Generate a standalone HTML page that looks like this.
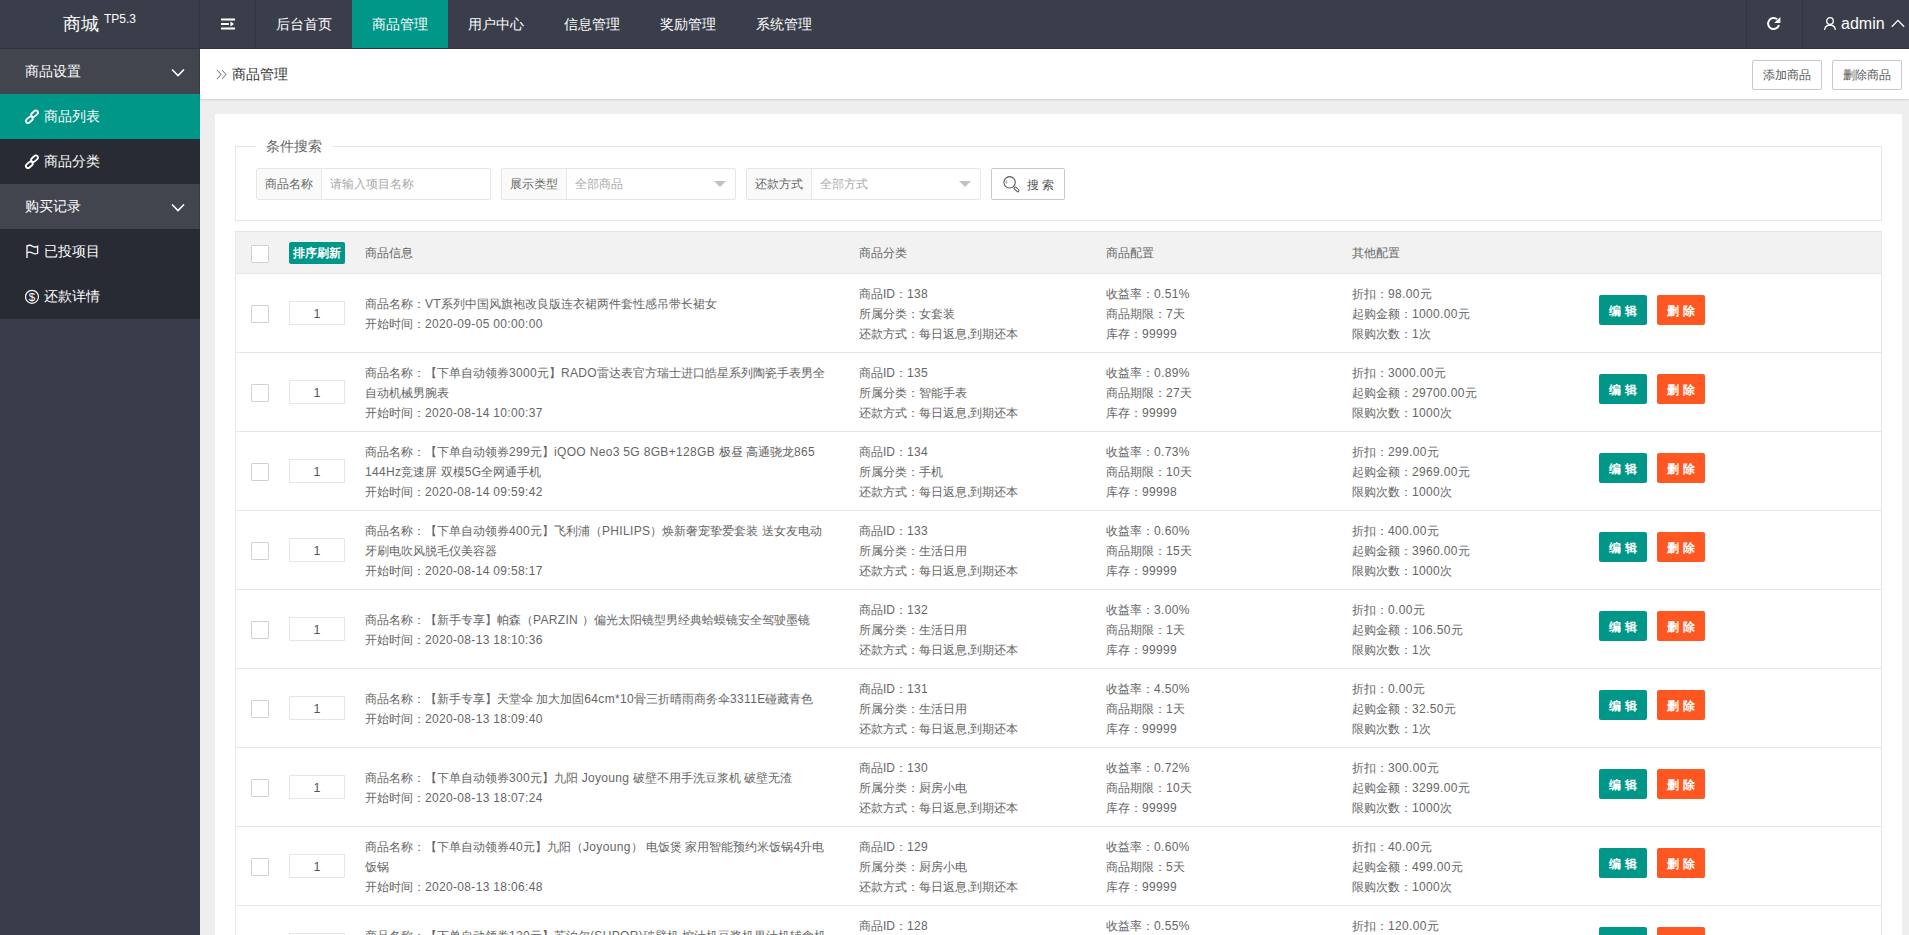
<!DOCTYPE html>
<html><head><meta charset="utf-8"><title>商城</title>
<style>
*{box-sizing:border-box;margin:0;padding:0}
html,body{width:1909px;height:935px;overflow:hidden}
body{position:relative;background:#eeeeee;font-family:"Liberation Sans",sans-serif;font-size:14px;color:#666}
.abs{position:absolute}
#hd{left:0;top:0;width:1909px;height:49px;background:#3a3e4a;border-bottom:1px solid #30333d}
#logo{left:0;top:0;width:199px;height:48px;color:#fff}
#logo .t{position:absolute;left:63px;top:12px;font-size:18px;line-height:24px}
#logo .v{position:absolute;left:104px;top:12px;font-size:12px;line-height:14px}
.vline{position:absolute;top:0;width:1px;height:48px;background:#32353f}
.nav{position:absolute;top:0;height:48px;line-height:48px;width:96px;text-align:center;color:#fff;font-size:14px}
.nav.on{background:#009688}
#side{left:0;top:49px;width:200px;height:886px;background:#393d49}
.grp{position:absolute;left:0;width:200px;height:45px;background:#42454e;color:#fff;font-size:14px;line-height:45px;padding-left:25px;border-right:1px solid #3b3d46}
.item{position:absolute;left:0;width:200px;height:45px;background:#282b33;color:#fff;font-size:14px;line-height:45px;padding-left:44px}
.item.on{background:#009688}
.item svg{position:absolute;left:25px;top:15px}
.item svg[width="20"]{left:22px;top:14px}
.chev{position:absolute;left:171px;top:19px}
#crumb{left:200px;top:49px;width:1709px;height:50px;background:#fff;box-shadow:0 1px 2px rgba(0,0,0,.12)}
#panel{left:215px;top:114px;width:1687px;height:900px;background:#fff}
.btn-o{position:absolute;top:11px;height:30px;line-height:28px;border:1px solid #c9c9c9;border-radius:2px;background:#fff;color:#555;font-size:12px;text-align:center}

.fsl{position:absolute;left:235px;top:146px;width:1647px;height:75px;border:1px solid #e6e6e6}
.legend{position:absolute;left:256px;top:136px;padding:0 10px;background:#fff;font-size:14px;line-height:20px;color:#666}
.ig{position:absolute;top:168px;width:235px;height:32px;border:1px solid #e6e6e6;border-radius:2px;background:#fff}
.ig .lb{position:absolute;left:0;top:0;width:65px;height:30px;background:#fafafa;border-right:1px solid #e6e6e6;font-size:12px;line-height:30px;text-align:center;color:#666;border-radius:2px 0 0 2px}
.ig .ph{position:absolute;left:73px;top:0;font-size:12px;line-height:30px;color:#aaa;white-space:nowrap}
.ig .tri{position:absolute;left:212px;top:12px;width:0;height:0;border-left:6px solid transparent;border-right:6px solid transparent;border-top:6px solid #c2c2c2}
.sbtn{position:absolute;left:991px;top:168px;width:74px;height:32px;border:1px solid #c9c9c9;border-radius:2px;background:#fff;color:#555;font-size:12px;line-height:30px}
.tbl{position:absolute;left:235px;top:231px;width:1647px;height:720px;border:1px solid #e6e6e6;border-bottom:0}
.thd{position:absolute;left:0;top:0;width:1645px;height:42px;background:#f2f2f2;border-bottom:1px solid #e6e6e6}
.row{position:absolute;left:0;width:1645px;height:79px;border-bottom:1px solid #e6e6e6;background:#fff}
.cb{position:absolute;left:15px;width:18px;height:18px;border:1px solid #d2d2d2;border-radius:1px;background:#fff}
.c{position:absolute;font-size:12px;line-height:20px;color:#666;white-space:nowrap}
.l{letter-spacing:0.33px}
.gbtn{position:absolute;left:53px;top:10px;width:56px;height:22px;background:#009688;border-radius:2px;color:#fff;font-size:12px;line-height:22px;text-align:center;font-weight:bold}
.sort{position:absolute;left:53px;width:56px;height:24px;border:1px solid #e6e6e6;font-size:12.5px;line-height:24px;text-align:center;color:#555;background:#fff}
.ebtn,.dbtn{position:absolute;width:48px;height:30px;border-radius:2px;color:#fff;font-size:12px;line-height:32px;text-align:center;font-weight:bold}
.ebtn{left:1363px;background:#009688}
.dbtn{left:1421px;background:#ff5722}
</style></head>
<body>
<div id="hd" class="abs">
  <div id="logo" class="abs"><span class="t">商城</span><span class="v">TP5.3</span></div>
  <div class="vline" style="left:199px"></div>
  <div class="vline" style="left:255px"></div>
  <svg class="abs" style="left:221px;top:18px" width="14" height="12" viewBox="0 0 14 12"><rect x="0" y="0.5" width="14" height="2" fill="#fff"/><rect x="0" y="5" width="8" height="2" fill="#fff"/><path d="M9.5 3.5 L13 6 L9.5 8.5 Z" fill="#fff"/><rect x="0" y="9.5" width="14" height="2" fill="#fff"/></svg>
  <div class="nav" style="left:256px">后台首页</div>
  <div class="nav on" style="left:352px">商品管理</div>
  <div class="nav" style="left:448px">用户中心</div>
  <div class="nav" style="left:544px">信息管理</div>
  <div class="nav" style="left:640px">奖励管理</div>
  <div class="nav" style="left:736px">系统管理</div>
  <div class="vline" style="left:1746px"></div>
  <div class="vline" style="left:1802px"></div>
  <svg class="abs" style="left:1762px;top:12px" width="24" height="24" viewBox="0 0 24 24"><path d="M16.9 12.9 A5.5 5.5 0 1 1 15.1 7.3" fill="none" stroke="#fff" stroke-width="2"/><path d="M18.4 4.9 L18.4 11.1 L12.2 11.1 Z" fill="#fff"/></svg>
  <svg class="abs" style="left:1823px;top:16px" width="14" height="15" viewBox="0 0 14 15"><circle cx="7" cy="5" r="3.3" fill="none" stroke="#fff" stroke-width="1.3"/><path d="M1.6 13.9 Q2 9.2 7 9 Q12 9.2 12.4 13.9" fill="none" stroke="#fff" stroke-width="1.3"/></svg>
  <span class="abs" style="left:1841px;top:14px;font-size:16px;line-height:20px;color:#fff">admin</span>
  <svg class="abs" style="left:1890px;top:18px" width="16" height="10" viewBox="0 0 16 10"><polyline points="1.8,8.8 8,2.4 14.2,8.8" fill="none" stroke="#fff" stroke-width="1.3"/></svg>
</div>
<div id="side" class="abs">
  <div class="grp" style="top:0">商品设置<svg class="chev" width="14" height="9" viewBox="0 0 14 9"><polyline points="1,1.5 7,7.5 13,1.5" fill="none" stroke="#fff" stroke-width="1.6"/></svg></div>
  <div class="item on" style="top:45px"><svg width="20" height="20" viewBox="0 0 20 20"><g fill="none" stroke="#fff" stroke-width="1.8"><rect x="-3.8" y="-2.1" width="7.6" height="4.2" rx="2.1" transform="translate(12.6 5.7) rotate(-42)"/><rect x="-3.8" y="-2.1" width="7.6" height="4.2" rx="2.1" transform="translate(7.3 11.8) rotate(-42)"/></g></svg>商品列表</div>
  <div class="item" style="top:90px"><svg width="20" height="20" viewBox="0 0 20 20"><g fill="none" stroke="#fff" stroke-width="1.8"><rect x="-3.8" y="-2.1" width="7.6" height="4.2" rx="2.1" transform="translate(12.6 5.7) rotate(-42)"/><rect x="-3.8" y="-2.1" width="7.6" height="4.2" rx="2.1" transform="translate(7.3 11.8) rotate(-42)"/></g></svg>商品分类</div>
  <div class="grp" style="top:135px">购买记录<svg class="chev" width="14" height="9" viewBox="0 0 14 9"><polyline points="1,1.5 7,7.5 13,1.5" fill="none" stroke="#fff" stroke-width="1.6"/></svg></div>
  <div class="item" style="top:180px"><svg width="15" height="15" viewBox="0 0 15 15"><g fill="none" stroke="#fff" stroke-width="1.3"><path d="M2 1.2 V13.9"/><path d="M2 2 C3.8 0.9 5.6 1 7.5 2.2 C9.2 3.3 10.8 3.3 12.6 2.2 V9.2 C10.8 10.2 9.2 10.2 7.5 9 C5.6 7.8 3.8 7.8 2 8.8"/></g></svg>已投项目</div>
  <div class="item" style="top:225px"><svg width="15" height="15" viewBox="0 0 15 15"><circle cx="7" cy="7.8" r="6.5" fill="none" stroke="#fff" stroke-width="1.2"/><text x="7" y="12" text-anchor="middle" font-family="Liberation Sans" font-size="11.5" fill="#fff">$</text></svg>还款详情</div>
</div>
<div id="crumb" class="abs">
  <svg class="abs" style="left:16px;top:20px" width="11" height="11" viewBox="0 0 11 11"><polyline points="1,1 5,5.5 1,10" fill="none" stroke="#888" stroke-width="1.1"/><polyline points="6,1 10,5.5 6,10" fill="none" stroke="#888" stroke-width="1.1"/></svg>
  <span class="abs" style="left:32px;top:15px;font-size:14px;line-height:20px;color:#333">商品管理</span>
  <div class="btn-o" style="left:1552px;width:70px">添加商品</div>
  <div class="btn-o" style="left:1632px;width:70px">删除商品</div>
</div>
<div id="panel" class="abs"></div>
<div class="fsl"></div>
<div class="legend">条件搜索</div>
<div class="ig" style="left:256px"><div class="lb">商品名称</div><div class="ph">请输入项目名称</div></div>
<div class="ig" style="left:501px"><div class="lb">展示类型</div><div class="ph">全部商品</div><div class="tri"></div></div>
<div class="ig" style="left:746px"><div class="lb">还款方式</div><div class="ph">全部方式</div><div class="tri"></div></div>
<div class="sbtn"><svg class="abs" style="left:11px;top:7px" width="18" height="18" viewBox="0 0 18 18"><circle cx="6.6" cy="6.3" r="5.7" fill="none" stroke="#555" stroke-width="1.05"/><path d="M3.3 4.6 Q2.9 6.2 3.6 7.6" fill="none" stroke="#666" stroke-width="0.8"/><rect x="-2.9" y="-1.2" width="5.8" height="2.4" rx="1.2" transform="translate(13.6 13.4) rotate(45)" fill="#fff" stroke="#555" stroke-width="0.95"/></svg><span class="abs" style="left:35px;top:1px">搜&nbsp;索</span></div>
<div class="tbl">
<div class="thd"><div class="cb" style="top:13px"></div><div class="gbtn">排序刷新</div><div class="c" style="left:129px;top:11px">商品信息</div><div class="c" style="left:623px;top:11px">商品分类</div><div class="c" style="left:870px;top:11px">商品配置</div><div class="c" style="left:1116px;top:11px">其他配置</div></div>
<div class="row" style="top:42px"><div class="cb" style="top:31px"></div><div class="sort" style="top:27px">1</div><div class="c" style="left:129px;top:20px">商品名称：<span class="l">VT</span>系列中国风旗袍改良版连衣裙两件套性感吊带长裙女<br>开始时间：<span class="l">2020-09-05 00:00:00</span></div><div class="c" style="left:623px;top:10px">商品ID：<span class="l">138</span><br>所属分类：女套装<br>还款方式：每日返息,到期还本</div><div class="c" style="left:870px;top:10px">收益率：<span class="l">0.51%</span><br>商品期限：<span class="l">7</span>天<br>库存：<span class="l">99999</span></div><div class="c" style="left:1116px;top:10px">折扣：<span class="l">98.00</span>元<br>起购金额：<span class="l">1000.00</span>元<br>限购次数：<span class="l">1</span>次</div><div class="ebtn" style="top:21px">编&nbsp;辑</div><div class="dbtn" style="top:21px">删&nbsp;除</div></div>
<div class="row" style="top:121px"><div class="cb" style="top:31px"></div><div class="sort" style="top:27px">1</div><div class="c" style="left:129px;top:10px">商品名称：【下单自动领券<span class="l">3000</span>元】<span class="l">RADO</span>雷达表官方瑞士进口皓星系列陶瓷手表男全<br>自动机械男腕表<br>开始时间：<span class="l">2020-08-14 10:00:37</span></div><div class="c" style="left:623px;top:10px">商品ID：<span class="l">135</span><br>所属分类：智能手表<br>还款方式：每日返息,到期还本</div><div class="c" style="left:870px;top:10px">收益率：<span class="l">0.89%</span><br>商品期限：<span class="l">27</span>天<br>库存：<span class="l">99999</span></div><div class="c" style="left:1116px;top:10px">折扣：<span class="l">3000.00</span>元<br>起购金额：<span class="l">29700.00</span>元<br>限购次数：<span class="l">1000</span>次</div><div class="ebtn" style="top:21px">编&nbsp;辑</div><div class="dbtn" style="top:21px">删&nbsp;除</div></div>
<div class="row" style="top:200px"><div class="cb" style="top:31px"></div><div class="sort" style="top:27px">1</div><div class="c" style="left:129px;top:10px">商品名称：【下单自动领券<span class="l">299</span>元】<span class="l">iQOO Neo3 5G 8GB+128GB </span>极昼 高通骁龙<span class="l">865</span><br><span class="l">144Hz</span>竞速屏 双模<span class="l">5G</span>全网通手机<br>开始时间：<span class="l">2020-08-14 09:59:42</span></div><div class="c" style="left:623px;top:10px">商品ID：<span class="l">134</span><br>所属分类：手机<br>还款方式：每日返息,到期还本</div><div class="c" style="left:870px;top:10px">收益率：<span class="l">0.73%</span><br>商品期限：<span class="l">10</span>天<br>库存：<span class="l">99998</span></div><div class="c" style="left:1116px;top:10px">折扣：<span class="l">299.00</span>元<br>起购金额：<span class="l">2969.00</span>元<br>限购次数：<span class="l">1000</span>次</div><div class="ebtn" style="top:21px">编&nbsp;辑</div><div class="dbtn" style="top:21px">删&nbsp;除</div></div>
<div class="row" style="top:279px"><div class="cb" style="top:31px"></div><div class="sort" style="top:27px">1</div><div class="c" style="left:129px;top:10px">商品名称：【下单自动领券<span class="l">400</span>元】飞利浦（<span class="l">PHILIPS</span>）焕新奢宠挚爱套装 送女友电动<br>牙刷电吹风脱毛仪美容器<br>开始时间：<span class="l">2020-08-14 09:58:17</span></div><div class="c" style="left:623px;top:10px">商品ID：<span class="l">133</span><br>所属分类：生活日用<br>还款方式：每日返息,到期还本</div><div class="c" style="left:870px;top:10px">收益率：<span class="l">0.60%</span><br>商品期限：<span class="l">15</span>天<br>库存：<span class="l">99999</span></div><div class="c" style="left:1116px;top:10px">折扣：<span class="l">400.00</span>元<br>起购金额：<span class="l">3960.00</span>元<br>限购次数：<span class="l">1000</span>次</div><div class="ebtn" style="top:21px">编&nbsp;辑</div><div class="dbtn" style="top:21px">删&nbsp;除</div></div>
<div class="row" style="top:358px"><div class="cb" style="top:31px"></div><div class="sort" style="top:27px">1</div><div class="c" style="left:129px;top:20px">商品名称：【新手专享】帕森（<span class="l">PARZIN </span>）偏光太阳镜型男经典蛤蟆镜安全驾驶墨镜<br>开始时间：<span class="l">2020-08-13 18:10:36</span></div><div class="c" style="left:623px;top:10px">商品ID：<span class="l">132</span><br>所属分类：生活日用<br>还款方式：每日返息,到期还本</div><div class="c" style="left:870px;top:10px">收益率：<span class="l">3.00%</span><br>商品期限：<span class="l">1</span>天<br>库存：<span class="l">99999</span></div><div class="c" style="left:1116px;top:10px">折扣：<span class="l">0.00</span>元<br>起购金额：<span class="l">106.50</span>元<br>限购次数：<span class="l">1</span>次</div><div class="ebtn" style="top:21px">编&nbsp;辑</div><div class="dbtn" style="top:21px">删&nbsp;除</div></div>
<div class="row" style="top:437px"><div class="cb" style="top:31px"></div><div class="sort" style="top:27px">1</div><div class="c" style="left:129px;top:20px">商品名称：【新手专享】天堂伞 加大加固<span class="l">64cm*10</span>骨三折晴雨商务伞<span class="l">3311E</span>碰藏青色<br>开始时间：<span class="l">2020-08-13 18:09:40</span></div><div class="c" style="left:623px;top:10px">商品ID：<span class="l">131</span><br>所属分类：生活日用<br>还款方式：每日返息,到期还本</div><div class="c" style="left:870px;top:10px">收益率：<span class="l">4.50%</span><br>商品期限：<span class="l">1</span>天<br>库存：<span class="l">99999</span></div><div class="c" style="left:1116px;top:10px">折扣：<span class="l">0.00</span>元<br>起购金额：<span class="l">32.50</span>元<br>限购次数：<span class="l">1</span>次</div><div class="ebtn" style="top:21px">编&nbsp;辑</div><div class="dbtn" style="top:21px">删&nbsp;除</div></div>
<div class="row" style="top:516px"><div class="cb" style="top:31px"></div><div class="sort" style="top:27px">1</div><div class="c" style="left:129px;top:20px">商品名称：【下单自动领券<span class="l">300</span>元】九阳<span class="l"> Joyoung </span>破壁不用手洗豆浆机 破壁无渣<br>开始时间：<span class="l">2020-08-13 18:07:24</span></div><div class="c" style="left:623px;top:10px">商品ID：<span class="l">130</span><br>所属分类：厨房小电<br>还款方式：每日返息,到期还本</div><div class="c" style="left:870px;top:10px">收益率：<span class="l">0.72%</span><br>商品期限：<span class="l">10</span>天<br>库存：<span class="l">99999</span></div><div class="c" style="left:1116px;top:10px">折扣：<span class="l">300.00</span>元<br>起购金额：<span class="l">3299.00</span>元<br>限购次数：<span class="l">1000</span>次</div><div class="ebtn" style="top:21px">编&nbsp;辑</div><div class="dbtn" style="top:21px">删&nbsp;除</div></div>
<div class="row" style="top:595px"><div class="cb" style="top:31px"></div><div class="sort" style="top:27px">1</div><div class="c" style="left:129px;top:10px">商品名称：【下单自动领券<span class="l">40</span>元】九阳（<span class="l">Joyoung</span>） 电饭煲 家用智能预约米饭锅<span class="l">4</span>升电<br>饭锅<br>开始时间：<span class="l">2020-08-13 18:06:48</span></div><div class="c" style="left:623px;top:10px">商品ID：<span class="l">129</span><br>所属分类：厨房小电<br>还款方式：每日返息,到期还本</div><div class="c" style="left:870px;top:10px">收益率：<span class="l">0.60%</span><br>商品期限：<span class="l">5</span>天<br>库存：<span class="l">99999</span></div><div class="c" style="left:1116px;top:10px">折扣：<span class="l">40.00</span>元<br>起购金额：<span class="l">499.00</span>元<br>限购次数：<span class="l">1000</span>次</div><div class="ebtn" style="top:21px">编&nbsp;辑</div><div class="dbtn" style="top:21px">删&nbsp;除</div></div>
<div class="row" style="top:674px"><div class="cb" style="top:31px"></div><div class="sort" style="top:27px">1</div><div class="c" style="left:129px;top:20px">商品名称：【下单自动领券<span class="l">120</span>元】苏泊尔<span class="l">(SUPOR)</span>破壁机 榨汁机豆浆机果汁机辅食机<br>开始时间：<span class="l">2020-08-13 18:05:11</span></div><div class="c" style="left:623px;top:10px">商品ID：<span class="l">128</span><br>所属分类：厨房小电<br>还款方式：每日返息,到期还本</div><div class="c" style="left:870px;top:10px">收益率：<span class="l">0.55%</span><br>商品期限：<span class="l">10</span>天<br>库存：<span class="l">99999</span></div><div class="c" style="left:1116px;top:10px">折扣：<span class="l">120.00</span>元<br>起购金额：<span class="l">1299.00</span>元<br>限购次数：<span class="l">1000</span>次</div><div class="ebtn" style="top:21px">编&nbsp;辑</div><div class="dbtn" style="top:21px">删&nbsp;除</div></div>
</div>
</body></html>
